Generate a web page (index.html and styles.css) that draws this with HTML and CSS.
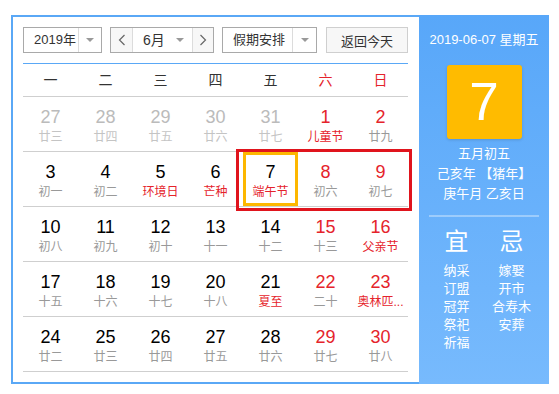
FILE: index.html
```html
<!DOCTYPE html>
<html lang="zh-CN">
<head>
    <meta charset="UTF-8">
    <meta name="viewport" content="width=device-width, initial-scale=1.0">
    <title>万年历</title>
    <link rel="stylesheet" href="styles.css">
</head>
<body>
<div class="calendar">
    <div class="cal-main">
        <div class="toolbar">
            <div class="select year">
                <span class="select-text">2019年</span>
                <span class="select-arrow"><i class="caret"></i></span>
            </div>
            <div class="select month">
                <span class="nav-btn prev">
                    <svg width="8" height="12" viewBox="0 0 8 12"><polyline points="6.5,1 1.5,6 6.5,11" fill="none" stroke="#666" stroke-width="1.2"/></svg>
                </span>
                <span class="select-text month-text">6月<i class="caret"></i></span>
                <span class="nav-btn next">
                    <svg width="8" height="12" viewBox="0 0 8 12"><polyline points="1.5,1 6.5,6 1.5,11" fill="none" stroke="#666" stroke-width="1.2"/></svg>
                </span>
            </div>
            <div class="select holiday">
                <span class="select-text">假期安排</span>
                <span class="select-arrow"><i class="caret"></i></span>
            </div>
            <button class="today-btn">返回今天</button>
        </div>

        <div class="weekdays">
            <span>一</span><span>二</span><span>三</span><span>四</span><span>五</span>
            <span class="red">六</span><span class="red">日</span>
        </div>

        <div class="week">
            <div class="day other"><span class="num">27</span><span class="lunar">廿三</span></div>
            <div class="day other"><span class="num">28</span><span class="lunar">廿四</span></div>
            <div class="day other"><span class="num">29</span><span class="lunar">廿五</span></div>
            <div class="day other"><span class="num">30</span><span class="lunar">廿六</span></div>
            <div class="day other"><span class="num">31</span><span class="lunar">廿七</span></div>
            <div class="day weekend"><span class="num">1</span><span class="lunar festival">儿童节</span></div>
            <div class="day weekend"><span class="num">2</span><span class="lunar">廿九</span></div>
        </div>
        <div class="week">
            <div class="day"><span class="num">3</span><span class="lunar">初一</span></div>
            <div class="day"><span class="num">4</span><span class="lunar">初二</span></div>
            <div class="day"><span class="num">5</span><span class="lunar festival">环境日</span></div>
            <div class="day"><span class="num">6</span><span class="lunar festival">芒种</span></div>
            <div class="day today"><span class="num">7</span><span class="lunar festival">端午节</span></div>
            <div class="day weekend"><span class="num">8</span><span class="lunar">初六</span></div>
            <div class="day weekend"><span class="num">9</span><span class="lunar">初七</span></div>
        </div>
        <div class="week">
            <div class="day"><span class="num">10</span><span class="lunar">初八</span></div>
            <div class="day"><span class="num">11</span><span class="lunar">初九</span></div>
            <div class="day"><span class="num">12</span><span class="lunar">初十</span></div>
            <div class="day"><span class="num">13</span><span class="lunar">十一</span></div>
            <div class="day"><span class="num">14</span><span class="lunar">十二</span></div>
            <div class="day weekend"><span class="num">15</span><span class="lunar">十三</span></div>
            <div class="day weekend"><span class="num">16</span><span class="lunar festival">父亲节</span></div>
        </div>
        <div class="week">
            <div class="day"><span class="num">17</span><span class="lunar">十五</span></div>
            <div class="day"><span class="num">18</span><span class="lunar">十六</span></div>
            <div class="day"><span class="num">19</span><span class="lunar">十七</span></div>
            <div class="day"><span class="num">20</span><span class="lunar">十八</span></div>
            <div class="day"><span class="num">21</span><span class="lunar festival">夏至</span></div>
            <div class="day weekend"><span class="num">22</span><span class="lunar">二十</span></div>
            <div class="day weekend"><span class="num">23</span><span class="lunar festival">奥林匹...</span></div>
        </div>
        <div class="week">
            <div class="day"><span class="num">24</span><span class="lunar">廿二</span></div>
            <div class="day"><span class="num">25</span><span class="lunar">廿三</span></div>
            <div class="day"><span class="num">26</span><span class="lunar">廿四</span></div>
            <div class="day"><span class="num">27</span><span class="lunar">廿五</span></div>
            <div class="day"><span class="num">28</span><span class="lunar">廿六</span></div>
            <div class="day weekend"><span class="num">29</span><span class="lunar">廿七</span></div>
            <div class="day weekend"><span class="num">30</span><span class="lunar">廿八</span></div>
        </div>

        <!-- annotation frame around 7-9 -->
        <div class="mark"></div>
    </div>

    <div class="cal-side">
        <div class="side-date">2019-06-07 星期五</div>
        <div class="side-day">7</div>
        <div class="side-lunar">
            <div>五月初五</div>
            <div>己亥年 【猪年】</div>
            <div>庚午月 乙亥日</div>
        </div>
        <div class="side-line"></div>
        <div class="almanac">
            <div class="almanac-col">
                <div class="almanac-title">宜</div>
                <div>纳采</div>
                <div>订盟</div>
                <div>冠笄</div>
                <div>祭祀</div>
                <div>祈福</div>
            </div>
            <div class="almanac-col">
                <div class="almanac-title">忌</div>
                <div>嫁娶</div>
                <div>开市</div>
                <div>合寿木</div>
                <div>安葬</div>
            </div>
        </div>
    </div>
</div>
</body>
</html>
```

FILE: styles.css
```css
* {
    box-sizing: border-box;
}

body {
    margin: 0;
    background: #fff;
    font-family: "Liberation Sans", "Noto Sans CJK SC", sans-serif;
    color: #000;
}

.calendar {
    display: flex;
    width: 538px;
    height: 369px;
    margin: 15px 0 0 11px;
}

/* left: month table */
.cal-main {
    position: relative;
    width: 408px;
    border: 2px solid #5aa8f6;
    border-right: none;
    padding: 10px 11px 0 10px;
}

.toolbar {
    display: flex;
    height: 26px;
}

.select {
    display: flex;
    height: 26px;
    border: 1px solid #a9a9a9;
    background: #fff;
    font-size: 13px;
    color: #333;
    white-space: nowrap;
}

.select-text {
    flex: 1;
    line-height: 24px;
    padding-left: 10px;
}

.select-arrow {
    display: flex;
    align-items: center;
    justify-content: center;
    border-left: 1px solid #dcdcdc;
}

.caret {
    display: inline-block;
    width: 0;
    height: 0;
    border-left: 4px solid transparent;
    border-right: 4px solid transparent;
    border-top: 4px solid #999;
}

.year {
    width: 79px;
}
.year .select-text {
    padding-left: 10px;
}
.year .select-arrow {
    width: 23px;
    flex: none;
}

.month {
    width: 104px;
    margin-left: 8px;
}
.nav-btn {
    display: flex;
    align-items: center;
    justify-content: center;
    background: #f7f7f7;
}
.nav-btn.prev {
    width: 22px;
    border-right: 1px solid #dcdcdc;
}
.nav-btn.next {
    width: 21px;
    border-left: 1px solid #dcdcdc;
}
.month-text {
    display: flex;
    align-items: center;
    justify-content: space-between;
    padding: 0 8px 0 10px;
    font-size: 14px;
}

.holiday {
    width: 95px;
    margin-left: 8px;
}
.holiday .select-arrow {
    width: 24px;
    flex: none;
}

.today-btn {
    width: 82px;
    height: 26px;
    margin-left: 9px;
    padding: 0;
    border: 1px solid #cfcfcf;
    background: #f7f7f7;
    font-family: inherit;
    font-size: 13px;
    color: #333;
}

.weekdays {
    display: grid;
    grid-template-columns: repeat(7, 55px);
    margin-top: 10px;
    border-top: 1px solid #5aa8f6;
    border-bottom: 1px solid #cfcfcf;
    height: 34px;
    line-height: 32px;
    font-size: 14px;
    color: #333;
    text-align: center;
}

.red {
    color: #e5232b;
}

.week {
    display: grid;
    grid-template-columns: repeat(7, 55px);
    border-bottom: 1px solid #cfcfcf;
    height: 55px;
}
.week:last-of-type {
    border-bottom: none;
}

.day {
    display: flex;
    flex-direction: column;
    align-items: center;
    padding-top: 10px;
}

.num {
    font-size: 18px;
    line-height: 20px;
}

.lunar {
    margin-top: 2px;
    font-size: 12px;
    line-height: 16px;
    color: #999;
    white-space: nowrap;
}

.lunar.festival {
    color: #e5232b;
}

.day.weekend .num {
    color: #e5232b;
}

.day.other .num {
    color: #bbb;
}
.day.other .lunar {
    color: #c4c4c4;
}

.day.today {
    box-shadow: inset 0 0 0 3px #fdb700;
}

.mark {
    position: absolute;
    left: 223px;
    top: 132px;
    width: 176px;
    height: 62px;
    border: 3px solid #e0141d;
}

/* right: today panel */
.cal-side {
    width: 130px;
    padding: 0 10px;
    background: linear-gradient(#58a7f9, #77bafd);
    color: #fff;
    text-align: center;
}

.side-date {
    margin-top: 16px;
    font-size: 13px;
    line-height: 18px;
}

.side-day {
    width: 75px;
    height: 74px;
    margin: 16px auto 0;
    background: #ffbb00;
    border-radius: 3px;
    box-shadow: 0 1px 3px rgba(0, 0, 0, 0.15);
    font-size: 53px;
    line-height: 74px;
}

.side-lunar {
    margin-top: 5px;
    font-size: 13px;
    line-height: 20px;
}

.side-line {
    height: 2px;
    margin-top: 11px;
    background: rgba(255, 255, 255, 0.35);
}

.almanac {
    display: grid;
    grid-template-columns: 55px 55px;
    margin-top: 11px;
    font-size: 13px;
    line-height: 18px;
}

.almanac-title {
    font-size: 24px;
    line-height: 28px;
    margin-bottom: 6px;
}
```
